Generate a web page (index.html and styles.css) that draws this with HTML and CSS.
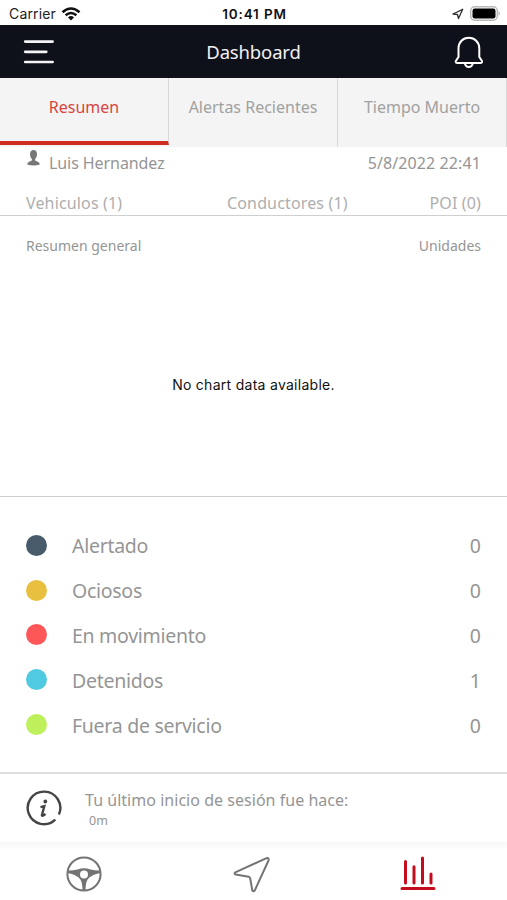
FILE: index.html
```html
<!DOCTYPE html>
<html lang="es">
<head>
<meta charset="utf-8">
<title>Dashboard</title>
<link rel="stylesheet" href="styles.css">
</head>
<body>
<div class="status">
  <div class="status-left"><span class="carrier">Carrier</span>
    <svg class="wifi" width="20" height="14" viewBox="0 0 20 14" fill="none" stroke="#111" stroke-width="2.5"><path d="M1.500 5.200Q10-2.200 18.500 5.200"/><path d="M4.600 8.300Q10 3.700 15.400 8.300"/><path d="M7 10.400Q10 7.800 13 10.400L10 13.400Z" fill="#111" stroke="none"/></svg>
  </div>
  <span class="clock">10:41 PM</span>
  <div class="status-right">
    <svg width="12" height="12" viewBox="0 0 12 12" fill="none" stroke="#333" stroke-width="1.300" stroke-linejoin="round"><path d="M1 6L10.700 1.300L6.500 10.500L5.500 6.500Z"/></svg>
    <svg width="31" height="15" viewBox="0 0 31 15"><rect x=".7" y=".7" width="26.600" height="13.600" rx="4" fill="#fff" stroke="#b8b8b8" stroke-width="1.400"/><rect x="2.500" y="2.500" width="23" height="10" rx="2.200" fill="#000"/><path d="M28.600 5Q31 7.500 28.600 10Z" fill="#aaa"/></svg>
  </div>
</div>
<header class="header">
  <svg class="menu" width="32" height="26" viewBox="0 0 32 26" stroke="#f4f4f6" stroke-width="2.700" stroke-linecap="round"><path d="M2.200 2.600H29.600M2.200 12.800H23.300M2.200 23H29.600"/></svg>
  <h1>Dashboard</h1>
  <svg class="bell" width="30" height="32" viewBox="0 0 30 32" fill="none" stroke="#fff" stroke-width="2" stroke-linecap="round" stroke-linejoin="round"><path d="M4.500 21V12.500C4.500 6 9 1.800 14.800 1.800S25.300 6 25.300 12.500V21L28 25Q28.400 27 26.500 27H3.300Q1.300 27 1.800 25Z"/><path d="M10.800 27Q11.500 31 14.800 31T18.900 27"/></svg>
</header>
<nav class="tabs">
  <div class="tab active"><span>Resumen</span></div>
  <div class="tab"><span>Alertas Recientes</span></div>
  <div class="tab"><span>Tiempo Muerto</span></div>
</nav>
<section class="summary">
  <div class="user-row">
    <svg width="13" height="17" viewBox="0 0 13 17" fill="#777"><path d="M6.500 0C8.800 0 10.200 1.800 10 4.500C9.900 6.700 9 8.200 8.100 9.100V10.500L11.300 12Q12.700 12.700 12.800 14.600Q10 15.600 6.500 15.600T.2 14.600Q.3 12.700 1.700 12L4.900 10.500V9.100C4 8.200 3.100 6.700 3 4.500C2.800 1.800 4.200 0 6.500 0Z"/></svg>
    <span class="user">Luis Hernandez</span><span class="date">5/8/2022 22:41</span>
  </div>
  <div class="counts"><span>Vehiculos (1)</span><span>Conductores (1)</span><span>POI (0)</span></div>
</section>
<section class="chart">
  <div class="chart-head"><span>Resumen general</span><span>Unidades</span></div>
  <p class="empty">No chart data available.</p>
</section>
<ul class="legend">
  <li><i class="dot navy"></i><span>Alertado</span><b>0</b></li>
  <li><i class="dot yellow"></i><span>Ociosos</span><b>0</b></li>
  <li><i class="dot red"></i><span>En movimiento</span><b>0</b></li>
  <li><i class="dot cyan"></i><span>Detenidos</span><b>1</b></li>
  <li><i class="dot green"></i><span>Fuera de servicio</span><b>0</b></li>
</ul>
<section class="info">
  <svg width="36" height="37" viewBox="0 0 36 37" fill="none" stroke="#444" stroke-width="2.400"><path d="M29.300 29.700A16.300 16.300 0 1 1 32.900 24.600"/><circle cx="19.300" cy="11.500" r="1.900" fill="#444" stroke="none"/><path d="M14.500 17.200L18.300 16.200L15.900 25.300Q15.600 26.600 19.500 24" stroke-width="2.400"/></svg>
  <div class="info-text"><div class="last">Tu último inicio de sesión fue hace:</div><div class="ago">0m</div></div>
</section>
<footer class="bottom">
  <div class="nav-wheel"><svg width="36" height="36" viewBox="0 0 36 36" fill="none" stroke="#747474" stroke-width="2"><circle cx="18" cy="18" r="16.600"/><path d="M1.500 14.500Q7 14.600 11.500 13.500Q18 10.800 24.500 13.500Q29 14.600 34.500 14.500V17Q25 18.500 21.600 23.500Q19.500 27 19.500 34.500H16.500Q16.500 27 14.400 23.500Q11 18.500 1.500 17Z" fill="#747474" stroke="none"/><circle cx="18" cy="18.500" r="4" fill="#fff" stroke="none"/></svg></div>
  <div class="nav-arrow"><svg width="38" height="38" viewBox="0 0 38 38" fill="none" stroke="#747474" stroke-width="2" stroke-linejoin="round"><path d="M2.300 17.300L33.500 3.200Q36.300 2.500 35.500 5.500L21.800 35.300Q20.500 37 19.300 35.300L17.200 23.300Q17 22.100 15.700 21.700L2.700 19.500Q.7 18.600 2.300 17.300Z"/></svg></div>
  <div class="nav-chart"><svg width="36" height="36" viewBox="0 0 36 36" stroke="#c30d1e" stroke-width="3" stroke-linecap="round"><path d="M5.500 5.500V27M14 10.700V27M22.500 2V27M31 18V27M2 32.500H34"/></svg></div>
</footer>
</body>
</html>
```
FILE: styles.css
```css
* { box-sizing: border-box; }
body { margin: 0; width: 507px; height: 900px; overflow: hidden; background: #fff; color: #959595; font-family: "Noto Sans", sans-serif; display: flex; flex-direction: column; }
svg { display: block; flex: none; }
span { white-space: nowrap; }
.status { height: 25px; display: grid; grid-template-columns: 1fr auto 1fr; align-items: center; padding: 2px 6px 0 9px; font: 14px/20px Inter, sans-serif; color: #222; }
.status-left { display: flex; align-items: center; gap: 5px; }
.carrier { letter-spacing: .15px; }
.status-right { display: flex; align-items: center; justify-content: flex-end; gap: 6px; }
.clock { font-size: 13.5px; font-weight: 600; letter-spacing: .85px; margin-right: 1px; color: #111; }
.header { height: 53px; background: #0f111a; display: flex; align-items: center; justify-content: space-between; padding: 0 23px 0 23px; }
.header h1 { margin: 0 2px 0 0; font-size: 18.5px; font-weight: 400; letter-spacing: -.15px; color: #f0f0f3; }
.tabs { height: 69px; display: grid; grid-template-columns: 169px 169px 169px; background: #f4f4f4; }
.tab { border-right: 1px solid #d8d8d8; text-align: center; font-size: 16px; line-height: 24px; padding-top: 17px; color: #a1a1a1; }
.active { height: 67px; border-bottom: 4px solid #d02d22; color: #d8453e; }
.summary { height: 69px; border-bottom: 1px solid #cfcfcf; padding: 3px 26px 0; }
.user-row { display: flex; align-items: flex-start; height: 40px; font-size: 16px; line-height: 26px; padding-left: 1px; }
.user { margin-left: 9px; letter-spacing: -.08px; }
.date { margin-left: auto; letter-spacing: .1px; }
.counts { display: grid; grid-template-columns: 201px 1fr auto; font-size: 16px; line-height: 26px; letter-spacing: .15px; color: #aeaeae; }
.chart { height: 281px; border-bottom: 1px solid #cfcfcf; padding: 19px 26px; }
.chart-head { display: flex; justify-content: space-between; font-size: 14px; line-height: 21px; }
.empty { margin: 119px 0 0; text-align: center; font: 14px/20px Inter, sans-serif; letter-spacing: .28px; color: #111; }
.legend { list-style: none; margin: 0; height: 277px; padding: 26px 26px 0; border-bottom: 2px solid #dedede; }
.legend li { display: flex; align-items: center; height: 44.8px; font-size: 19.5px; line-height: 28px; letter-spacing: -.28px; }
.legend span, .legend b { margin-top: 2px; }
.legend b { font-weight: 400; margin-left: auto; letter-spacing: 0; }
.dot { width: 21px; height: 21px; border-radius: 50%; margin-right: 25px; }
.navy { background: #485b6b; }
.yellow { background: #e8bf3f; }
.red { background: #ff5757; }
.cyan { background: #50cae0; }
.green { background: #bdf05a; }
.info { height: 68px; display: flex; padding: 16px 26px 0; }
.info-text { margin-left: 23px; }
.last { font-size: 16px; line-height: 22px; margin-top: -1px; letter-spacing: .03px; }
.ago { font-size: 12.5px; line-height: 18px; margin: 1px 0 0 4px; }
.bottom { flex: 1; display: grid; grid-template-columns: repeat(3, 1fr); justify-items: center; padding-top: 14px; background: linear-gradient(#f7f7f7 0, #fff 8px); }
.nav-wheel { padding-right: 1px; }
.nav-arrow { padding-right: 4px; margin-top: -1px; }
.nav-chart { padding-right: 9px; }
```
